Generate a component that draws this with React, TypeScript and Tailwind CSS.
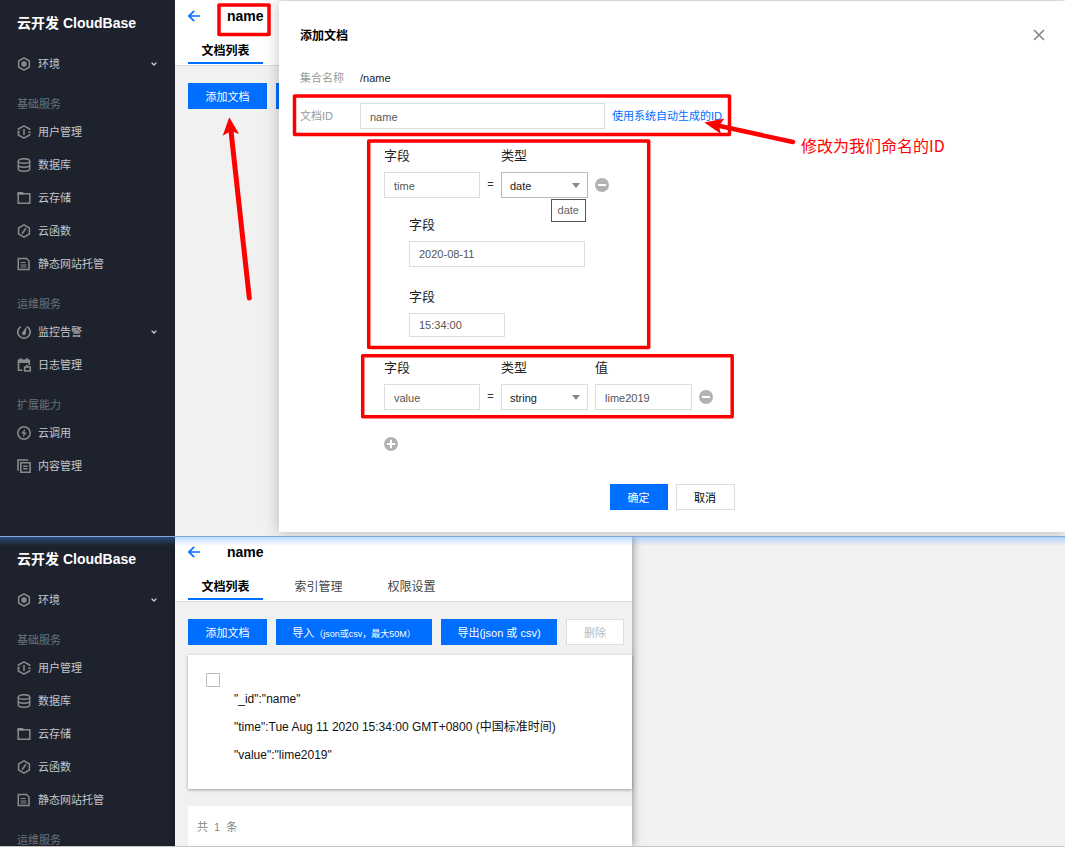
import type { ReactNode } from "react";

type Item = { label: string; icon: ReactNode; expandable?: boolean };
type Group = { title?: string; items: Item[] };

const hexagon = "M7 .9 12.4 4v6L7 13.1 1.6 10V4Z";

const icons = {
  env: (
    <>
      <path d={hexagon} />
      <circle cx="7" cy="7" r="2.7" fill="currentColor" stroke="none" />
    </>
  ),
  user: (
    <>
      <path d="M1.4 5V4L7 .9 12.6 4v1M1.400 6.500V10L7 13.100 12.600 10V9M.4 6.600h2.400M11.200 7.200h2.400" />
      <path d="M7 4v6" />
    </>
  ),
  database: (
    <>
      <ellipse cx="7" cy="3" rx="5.7" ry="2.3" />
      <path d="M1.300 3v8c0 1.200 2.500 2.200 5.700 2.200s5.700-1 5.700-2.200V3M1.300 7c0 1.200 2.500 2.200 5.700 2.200s5.700-1 5.700-2.200" />
    </>
  ),
  folder: (
    <>
      <path d="M1.200 2.700h11.600v9.600H1.200Z" />
      <path d="M.5 1h5.500l1.500 2.400H.5Z" fill="currentColor" stroke="none" />
    </>
  ),
  fn: (
    <>
      <path d={hexagon} />
      <path d="M8.900 4.300 5.100 9.700" />
    </>
  ),
  site: (
    <>
      <path d="M1.300 1.500h8.200l2.500 2.500v8.500H1.300Z" />
      <path d="M3.600 5.500h5M3.600 8h5.800M3.600 10h5.800" strokeWidth="1.200" />
    </>
  ),
  monitor: (
    <>
      <path d="M3.700 1.700A6.200 6.200 0 1 0 10.300 1.700" strokeWidth="1.700" />
      <path d="M9.800 1 8.900 7.600A2 2 0 1 1 6 6.500Z" fill="currentColor" stroke="none" />
    </>
  ),
  log: (
    <>
      <path d="M5.500 12.300H1.500V2.500h10.800V7" strokeWidth="1.600" />
      <path d="M.8 1.600h12v3.500H.8ZM2.800 0h1.800V2H2.800ZM9 0h1.800V2H9Z" fill="currentColor" stroke="none" />
      <path d="M7.700 9h5.500v4H7.700ZM9 7.800h2" strokeWidth="1.600" />
    </>
  ),
  call: (
    <>
      <circle cx="7" cy="7" r="6.200" />
      <path d="M8 2.800 4.300 7.600h2.200L6 11.200l3.700-4.800H7.500Z" fill="currentColor" stroke="none" />
    </>
  ),
  content: (
    <>
      <path d="M1 11.800V1h10.200" strokeWidth="1.600" />
      <path d="M3.800 3.800h9.300v9.400H3.800Z" strokeWidth="1.600" />
      <path d="M6.300 7.300h4.300M6.300 9.800h4.300" />
    </>
  ),
};

const envGroup: Group = { items: [{ label: "环境", icon: icons.env, expandable: true }] };

const baseGroup: Group = {
  title: "基础服务",
  items: [
    { label: "用户管理", icon: icons.user },
    { label: "数据库", icon: icons.database },
    { label: "云存储", icon: icons.folder },
    { label: "云函数", icon: icons.fn },
    { label: "静态网站托管", icon: icons.site },
  ],
};

const fullNav: Group[] = [
  envGroup,
  baseGroup,
  {
    title: "运维服务",
    items: [
      { label: "监控告警", icon: icons.monitor, expandable: true },
      { label: "日志管理", icon: icons.log },
    ],
  },
  {
    title: "扩展能力",
    items: [
      { label: "云调用", icon: icons.call },
      { label: "内容管理", icon: icons.content },
    ],
  },
];

const shortNav: Group[] = [envGroup, baseGroup, { title: "运维服务", items: [] }];

function Sidebar({ groups }: { groups: Group[] }) {
  return (
    <aside className="w-[175px] shrink-0 overflow-hidden bg-[#1e222d] pb-[54px]">
      <h1 className="h-[47px] pl-[17px] text-sm leading-[47px] font-bold text-white">云开发 CloudBase</h1>
      <nav>
        {groups.map((group, i) => (
          <div key={i}>
            {group.title && (
              <h2 className="h-[35px] pt-3 pl-[17px] text-[11px] leading-[24px] text-[#6b747c]">{group.title}</h2>
            )}
            <ul>
              {group.items.map((item) => (
                <li key={item.label}>
                  <a href="#" className="flex h-[33px] items-center pr-[18px] pl-[17px] text-[11px] text-[#c3c6ca]">
                    <svg
                      viewBox="0 0 14 14"
                      className="mr-[7px] size-[14px] text-[#8a8a8a]"
                      fill="none"
                      stroke="currentColor"
                      strokeWidth="1.5"
                    >
                      {item.icon}
                    </svg>
                    <span className="flex-1 pt-0.5">{item.label}</span>
                    {item.expandable && (
                      <svg viewBox="0 0 6 4" className="h-1 w-1.5" fill="none" stroke="#d0d0d0" strokeWidth="1.3">
                        <path d="M.6.600 3 3 5.400.600" />
                      </svg>
                    )}
                  </a>
                </li>
              ))}
            </ul>
          </div>
        ))}
      </nav>
    </aside>
  );
}

function Header({ tabs }: { tabs: string[] }) {
  return (
    <header className="h-[66px] border-b border-[#dddddd] bg-white pl-[13px]">
      <div className="flex h-8 items-center">
        <button type="button" aria-label="返回" className="mr-[27px]">
          <svg viewBox="0 0 12 12" className="block size-3" fill="none" stroke="#006eff" strokeWidth="1.700">
            <path d="M12 6H1.200M6.200.800 1 6l5.200 5.200" />
          </svg>
        </button>
        <h2 className="text-sm font-bold text-black">name</h2>
      </div>
      <div className="flex h-8 gap-[18px] text-xs">
        {tabs.map((tab, i) => (
          <button
            key={tab}
            type="button"
            className={
              i === 0
                ? "w-[75px] shrink-0 border-b-2 border-[#006eff] pt-2 font-bold text-black"
                : "w-[75px] shrink-0 border-b-2 border-transparent pt-2 text-[#444444]"
            }
          >
            {tab}
          </button>
        ))}
      </div>
    </header>
  );
}

const primary = "h-[26px] shrink-0 bg-[#006eff] pt-0.5 text-[11px] whitespace-nowrap text-white";
const field = "block border border-[#dddddd] bg-white px-[9px] text-[11px] text-[#555555] outline-none";

function RemoveButton() {
  return (
    <button type="button" aria-label="删除字段" className="ml-[7px]">
      <svg viewBox="0 0 14 14" className="block size-[14px]">
        <circle cx="7" cy="7" r="7" fill="#b2b2b2" />
        <path d="M3 7h8" stroke="#fff" strokeWidth="2" />
      </svg>
    </button>
  );
}

function FieldLabel({ id, children }: { id: string; children: string }) {
  return (
    <label htmlFor={id} className="mb-1.5 block text-[13px] leading-5 text-[#222222]">
      {children}
    </label>
  );
}

function FieldRow({ prefix, name, type, value }: { prefix: string; name: string; type: string; value?: string }) {
  const active = value === undefined;
  return (
    <div className="flex items-end">
      <div>
        <FieldLabel id={prefix + "-name"}>字段</FieldLabel>
        <input id={prefix + "-name"} defaultValue={name} className={field + " h-[26px] w-24 pt-0.5"} />
      </div>
      <span className="h-[26px] w-[21px] text-center text-[11px] leading-[24px] text-[#333333]">=</span>
      <div>
        <FieldLabel id={prefix + "-type"}>类型</FieldLabel>
        <div className="relative">
          <select
            id={prefix + "-type"}
            defaultValue={type}
            className={
              active
                ? "block h-[26px] w-[87px] appearance-none border border-[#bbbbbb] bg-white pt-0.5 pl-2 text-[11px] text-[#222222] outline-none"
                : "block h-[26px] w-[87px] appearance-none border border-[#dddddd] bg-white pt-0.5 pl-2 text-[11px] text-[#222222] outline-none"
            }
          >
            <option value="date">date</option>
            <option value="string">string</option>
          </select>
          <svg viewBox="0 0 8 5" className="pointer-events-none absolute top-[11px] right-2 h-[5px] w-2">
            <path d="M0 0h8L4 5Z" fill="#888" />
          </svg>
          {active && (
            <span
              role="tooltip"
              className="absolute top-[27px] right-0.5 z-10 h-[23px] border border-[#555555] bg-white px-1.5 text-[11px] leading-[21px] text-[#666666]"
            >
              date
            </span>
          )}
        </div>
      </div>
      {value !== undefined && (
        <div className="ml-[7px]">
          <FieldLabel id={prefix + "-value"}>值</FieldLabel>
          <input id={prefix + "-value"} defaultValue={value} className={field + " h-[26px] w-[97px] pt-0.5"} />
        </div>
      )}
      <div className="flex h-[26px] items-center">
        <RemoveButton />
      </div>
    </div>
  );
}

function AddDocument() {
  return (
    <section
      role="dialog"
      aria-labelledby="dialog-title"
      className="relative mt-px mb-1 min-w-0 flex-1 bg-white pt-[22px] pb-[22px] pl-[21px] shadow-[0_0_14px_rgba(0,0,0,0.25)]"
    >
      <div className="flex h-6 items-center justify-between pr-5">
        <h2 id="dialog-title" className="pt-0.5 text-xs font-bold text-black">
          添加文档
        </h2>
        <button type="button" aria-label="关闭">
          <svg viewBox="0 0 12 12" className="block size-3" fill="none" stroke="#888" strokeWidth="1.700">
            <path d="m1 1 10 10M11 1 1 11" />
          </svg>
        </button>
      </div>
      <form>
        <div className="mt-[21px] flex h-5 items-center text-[11px]">
          <span className="w-[60px] text-[#999999]">集合名称</span>
          <span className="text-[#222222]">/name</span>
        </div>
        <div className="mt-[15px] flex h-[26px] items-center text-[11px]">
          <label htmlFor="doc-id" className="w-[60px] text-[#999999]">
            文档ID
          </label>
          <input id="doc-id" defaultValue="name" className={field + " h-[26px] w-[245px] pt-0.5"} />
          <a href="#" className="ml-[7px] text-[#006eff]">
            使用系统自动生成的ID
          </a>
        </div>
        <div className="mt-[17px] pl-[84px]">
          <FieldRow prefix="time" name="time" type="date" />
          <div className="mt-[17px] pl-[25px]">
            <FieldLabel id="time-date">字段</FieldLabel>
            <input id="time-date" defaultValue="2020-08-11" className={field + " h-[26px] w-44"} />
          </div>
          <div className="mt-5 mb-[21px] pl-[25px]">
            <FieldLabel id="time-clock">字段</FieldLabel>
            <input id="time-clock" defaultValue="15:34:00" className={field + " h-6 w-24"} />
          </div>
          <FieldRow prefix="value" name="value" type="string" value="lime2019" />
          <button type="button" aria-label="添加字段" className="mt-[27px] block">
            <svg viewBox="0 0 14 14" className="block size-[14px]">
              <circle cx="7" cy="7" r="7" fill="#b2b2b2" />
              <path d="M2.800 7h8.400M7 2.800v8.400" stroke="#fff" strokeWidth="2" />
            </svg>
          </button>
        </div>
        <div className="mt-[33px] -ml-[21px] flex justify-center gap-2">
          <button type="button" className={primary + " w-[58px]"}>
            确定
          </button>
          <button
            type="button"
            className="h-[26px] w-[59px] border border-[#dddddd] bg-white pt-0.5 text-[11px] text-black"
          >
            取消
          </button>
        </div>
      </form>
    </section>
  );
}

function Annotations() {
  return (
    <div className="pointer-events-none absolute inset-0 z-20">
      <svg className="absolute inset-0 size-full" fill="none" stroke="#ff0000" strokeWidth="3.500" strokeLinejoin="round">
        <rect x="219" y="5" width="50" height="29.500" />
        <rect x="294.500" y="96" width="435" height="38.500" />
        <rect x="368.700" y="141" width="280" height="206.500" />
        <rect x="362.700" y="355.700" width="369.500" height="61" />
        <path d="M231 131 249.300 298" strokeWidth="5" strokeLinecap="round" />
        <path d="M229.300 117.300 239 134 231 131 222.700 135.700Z" fill="#ff0000" stroke="none" />
        <path d="M720 126 793 142" strokeWidth="4.500" strokeLinecap="round" />
        <path d="M704.300 122.400 724.300 118.600 719 126 721 134Z" fill="#ff0000" stroke="none" />
      </svg>
      <p className="absolute top-[133px] left-[801px] font-['Noto_Sans_CJK_SC',sans-serif] text-base leading-6 whitespace-nowrap text-[#ff0000]">
        修改为我们命名的ID
      </p>
    </div>
  );
}

function DocumentList() {
  return (
    <main className="w-[457px] shrink-0 bg-[#f1f1f1] shadow-[1px_0_8px_rgba(0,0,0,0.4)]">
      <Header tabs={["文档列表", "索引管理", "权限设置"]} />
      <div className="mt-[17px] ml-[13px] flex gap-[9px]">
        <button type="button" className={primary + " w-[79px]"}>
          添加文档
        </button>
        <button type="button" className={primary + " w-[156px]"}>
          导入<span className="text-[9px]">（json或csv，最大50M）</span>
        </button>
        <button type="button" className={primary + " w-[116px]"}>
          导出(json 或 csv)
        </button>
        <button
          type="button"
          disabled
          className="h-[26px] w-[58px] border border-[#dddddd] bg-white pt-0.5 text-[11px] text-[#bbbbbb]"
        >
          删除
        </button>
      </div>
      <article className="mt-[10px] ml-[13px] flex bg-white pt-[18px] pb-5 pl-[18px] shadow-[0_1px_3px_rgba(0,0,0,0.35)]">
        <input
          type="checkbox"
          aria-label="选择文档 name"
          className="size-[14px] appearance-none rounded-[1px] border border-[#bbbbbb] bg-white"
        />
        <div className="mt-3 ml-[14px] text-xs leading-7 text-[#111111]">
          <p>"_id":"name"</p>
          <p>"time":Tue Aug 11 2020 15:34:00 GMT+0800 (中国标准时间)</p>
          <p>"value":"lime2019"</p>
        </div>
      </article>
      <footer className="mt-[17px] ml-[13px] h-[42px] bg-white pl-[9px] text-[11px] leading-[42px] text-[#888888]">
        共&nbsp; 1 &nbsp;条
      </footer>
    </main>
  );
}

export default function App() {
  return (
    <div className="flex h-screen flex-col overflow-hidden bg-[#f1f1f1] font-['Liberation_Sans','Noto_Sans_CJK_SC',sans-serif]">
      <section className="relative flex shrink-0 overflow-hidden">
        <Sidebar groups={fullNav} />
        <div className="w-[104px] shrink-0 overflow-hidden">
          <Header tabs={["文档列表"]} />
          <div className="mt-[17px] ml-[13px] flex gap-[9px]">
            <button type="button" className={primary + " w-[79px]"}>
              添加文档
            </button>
            <button type="button" aria-label="导入" className={primary + " w-[156px]"} />
          </div>
        </div>
        <AddDocument />
        <Annotations />
      </section>
      <section className="relative flex min-h-0 flex-1 overflow-hidden border-b border-[#c4c4c4]">
        <Sidebar groups={shortNav} />
        <DocumentList />
        <div className="pointer-events-none absolute inset-x-0 top-0 h-[10px] border-t border-[#82a9df] bg-linear-to-b from-[#3c96ff]/35 to-transparent" />
      </section>
    </div>
  );
}
